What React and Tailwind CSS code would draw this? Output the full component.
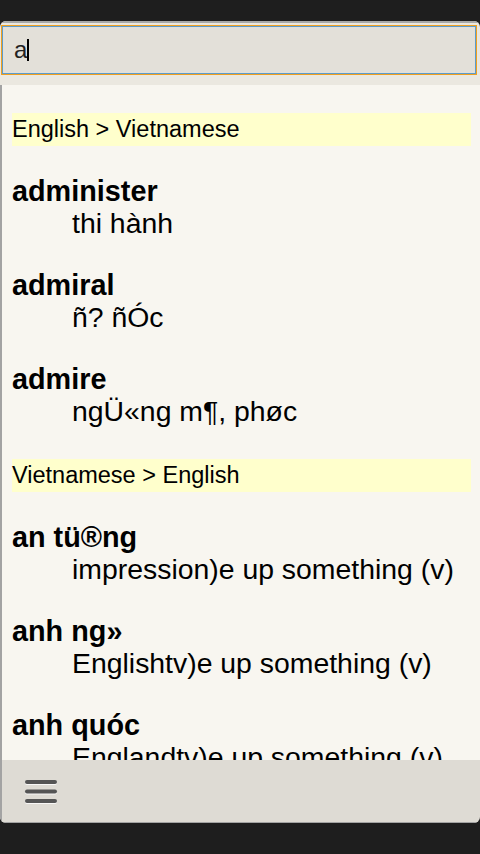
import React from 'react';

const sections = [
  {
    title: 'English > Vietnamese',
    entries: [
      { word: 'administer', meaning: 'thi hành' },
      { word: 'admiral', meaning: 'ñ? ñÓc' },
      { word: 'admire', meaning: 'ngÜ«ng m¶, phøc' },
    ],
  },
  {
    title: 'Vietnamese > English',
    entries: [
      { word: 'an tü®ng', meaning: 'impression)e up something (v)' },
      { word: 'anh ng»', meaning: 'Englishtv)e up something (v)' },
      { word: 'anh quóc', meaning: 'Englandtv)e up something (v)' },
    ],
  },
];

function Entry({ word, meaning, first }) {
  return (
    <div className={first ? 'mt-[29px]' : 'mt-[30px]'}>
      <div className="text-[28.8px] leading-[32px] font-bold text-black whitespace-nowrap">{word}</div>
      <div className="pl-[60px] text-[28.4px] leading-[32px] text-black whitespace-nowrap">{meaning}</div>
    </div>
  );
}

export default function App() {
  return (
    <div
      className="w-[480px] h-[854px] bg-[#1e1e1e] flex flex-col overflow-hidden"
      style={{ fontFamily: '"Liberation Sans", Arial, sans-serif' }}
    >
      <div className="h-[21px] shrink-0"></div>

      {/* dictionary window */}
      <div className="h-[802px] shrink-0 flex flex-col rounded-[6px] overflow-hidden">
        {/* search header */}
        <div className="shrink-0 bg-[#ebe8e0] border-t-2 border-[#a9a9a7] pt-[2px] pb-[10px] pl-[1px] pr-[3px]">
          <div className="h-[50px] border border-[#f0a020]">
            <div className="h-full border border-[#5c9ccc] bg-[#e3e0d9] flex items-center pl-[11px]">
              <span className="text-[24px] text-[#222] leading-none">a</span>
              <span className="inline-block w-[2px] h-[22px] bg-black"></span>
            </div>
          </div>
        </div>

        {/* results */}
        <div className="flex-1 overflow-hidden bg-[#f8f6f0] border-l-2 border-[#a3a3a3] pl-[10px] pr-[9px] pt-[28px]">
          {sections.map((section, i) => (
            <div key={section.title} className={i > 0 ? 'mt-[32px]' : ''}>
              <div className="h-[33px] bg-[#ffffcc] flex items-center text-[23.5px] text-black">
                {section.title}
              </div>
              {section.entries.map((e, j) => (
                <Entry key={e.word} word={e.word} meaning={e.meaning} first={j === 0} />
              ))}
            </div>
          ))}
        </div>

        {/* bottom toolbar */}
        <div className="h-[63px] shrink-0 bg-[#dedbd4] border-b border-l-2 border-[#a3a3a3] pl-[22px] pt-[19px]">
          <svg width="34" height="26" viewBox="0 0 34 26">
            <g stroke="#ffffff" strokeWidth="4" strokeLinecap="round" opacity="0.8">
              <line x1="3" y1="4" x2="31" y2="4" />
              <line x1="3" y1="13.5" x2="31" y2="13.5" />
              <line x1="3" y1="23" x2="31" y2="23" />
            </g>
            <g stroke="#555555" strokeWidth="4" strokeLinecap="round">
              <line x1="3" y1="3" x2="31" y2="3" />
              <line x1="3" y1="12.5" x2="31" y2="12.5" />
              <line x1="3" y1="22" x2="31" y2="22" />
            </g>
          </svg>
        </div>
      </div>
    </div>
  );
}
